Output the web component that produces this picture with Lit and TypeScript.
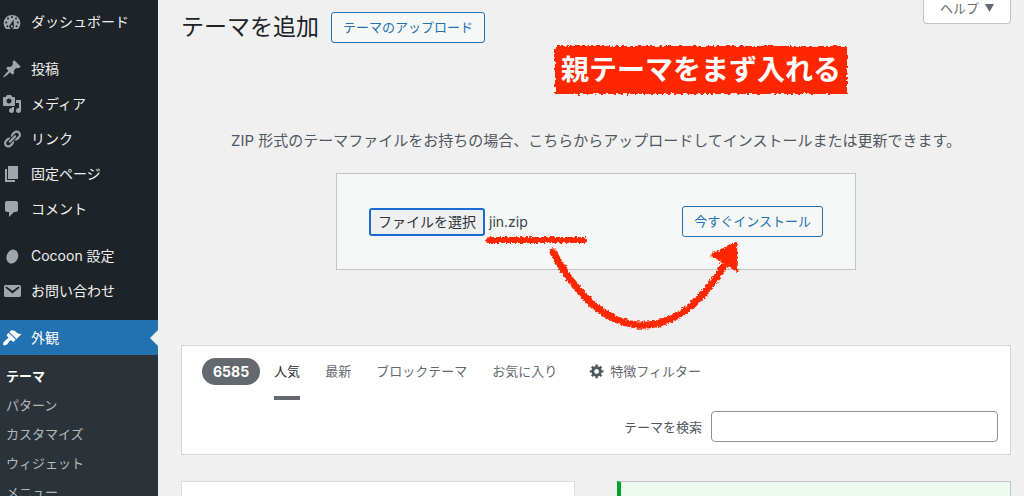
import { LitElement, html, css, svg } from "lit";
import { customElement, property, state, query } from "lit/decorators.js";
import { classMap } from "lit/directives/class-map.js";

const ICONS: Record<string, unknown> = {
  dashboard: svg`<path fill-rule="evenodd" d="M3.8 17A8.6 8.6 0 0 1 1.6 11.3a8.4 8.4 0 0 1 16.8 0A8.6 8.6 0 0 1 16.2 17zM10 4a1 1 0 1 0 0 2 1 1 0 0 0 0-2zM6 5.600a1 1 0 1 0 0 2 1 1 0 0 0 0-2zM14 5.600a1 1 0 1 0 0 2 1 1 0 0 0 0-2zM4.200 9.500a1 1 0 1 0 0 2 1 1 0 0 0 0-2zM15.800 9.500a1 1 0 1 0 0 2 1 1 0 0 0 0-2zM5.400 13.300a1 1 0 1 0 0 2 1 1 0 0 0 0-2zM14.600 13.300a1 1 0 1 0 0 2 1 1 0 0 0 0-2zM11.600 7.400L8.300 12.600a2.400 2.400 0 1 0 3.600 1.200zM9.900 13.300a1.100 1.100 0 1 1 0 2.200 1.100 1.100 0 0 1 0-2.200z"/>`,
  post: svg`<path d="M10.44 3.02l1.82-1.82 6.36 6.35-1.83 1.82c-1.05-.68-2.48-.57-3.41.36l-.75.75c-.92.93-1.04 2.35-.35 3.41l-1.83 1.82-2.41-2.41-2.8 2.79c-.42.42-3.38 2.71-3.8 2.29s1.86-3.39 2.28-3.81l2.79-2.79L4.1 9.36l1.83-1.82c1.05.69 2.48.57 3.4-.36l.75-.75c.93-.92 1.05-2.35.36-3.41z"/>`,
  media: svg`<path fill-rule="evenodd" d="M13 11V4c0-.55-.45-1-1-1h-1.67L9 1H5L3.67 3H2c-.55 0-1 .45-1 1v7c0 .55.45 1 1 1h10c.55 0 1-.45 1-1zM7 4.500c1.380 0 2.500 1.120 2.500 2.500S8.380 9.500 7 9.500 4.500 8.380 4.500 7 5.620 4.500 7 4.500zM14 6h5v10.500c0 1.380-1.120 2.500-2.500 2.500S14 17.880 14 16.500s1.120-2.500 2.500-2.500c.17 0 .34.02.5.05V9h-3V6zm-4 8.050V13h2v3.500c0 1.380-1.120 2.500-2.500 2.500S7 17.880 7 16.500 8.120 14 9.500 14c.17 0 .34.02.5.05z"/>`,
  link: svg`<path d="M17.740 2.760c1.680 1.690 1.680 4.410 0 6.100l-1.530 1.520c-1.120 1.120-2.700 1.470-4.140 1.090l2.620-2.610.760-.770.760-.760c.840-.840.840-2.200 0-3.040-.840-.850-2.200-.850-3.040 0l-.770.760-3.380 3.380c-.370-1.440-.020-3.020 1.100-4.140l1.520-1.530c1.690-1.680 4.420-1.680 6.100 0zM8.590 13.430l5.340-5.340c.420-.420.420-1.100 0-1.520-.440-.430-1.130-.390-1.530 0l-5.330 5.340c-.420.420-.420 1.100 0 1.520.440.430 1.130.390 1.520 0zm-.760 2.290l4.140-4.150c.380 1.440.030 3.020-1.090 4.140l-1.520 1.530c-1.690 1.680-4.410 1.680-6.100 0-1.680-1.680-1.680-4.420 0-6.100l1.530-1.520c1.120-1.120 2.700-1.470 4.140-1.100l-4.140 4.150c-.850.840-.850 2.200 0 3.050.840.840 2.200.840 3.040 0z"/>`,
  page: svg`<path d="M6 15V2h10v13H6zm-1 1h8v2H3V5h2v11z"/>`,
  comment: svg`<path d="M5 2h9c1.100 0 2 .9 2 2v7c0 1.100-.9 2-2 2h-2l-5 5v-5H5c-1.100 0-2-.9-2-2V4c0-1.100.9-2 2-2z"/>`,
  cocoon: svg`<ellipse cx="10.300" cy="10.600" rx="5.700" ry="7.200" transform="rotate(22 10.300 10.600)"/>`,
  mail: svg`<path fill-rule="evenodd" d="M3.870 4h13.250C18.370 4 19 4.590 19 5.790v8.420c0 1.190-.630 1.790-1.880 1.790H3.870c-1.250 0-1.880-.6-1.880-1.790V5.790c0-1.200.630-1.790 1.880-1.790zm6.620 8.600l6.740-5.530c.240-.2.430-.660.130-1.070-.290-.410-.820-.420-1.170-.170l-5.700 3.860L4.800 5.830c-.350-.250-.880-.240-1.170.170-.3.410-.110.870.130 1.070z"/>`,
  brush: svg`<path d="M14.480 11.060L7.410 3.990l1.500-1.500c.5-.56 2.300-.47 3.510.32 1.210.8 1.430 1.280 2.910 2.100 1.180.64 2.450 1.260 4.450.85zm-.71.71L6.700 4.700 4.930 6.470c-.39.39-.39 1.020 0 1.410l1.060 1.060c.39.39.39 1.030 0 1.420-.6.6-1.430 1.110-2.210 1.690-.35.26-.7.53-1.010.84C1.430 14.230.4 16.080 1.400 17.070c.99 1 2.840-.03 4.180-1.360.31-.31.58-.66.85-1.020.57-.78 1.080-1.610 1.690-2.210.39-.39 1.020-.39 1.410 0l1.060 1.060c.39.39 1.020.39 1.410 0z"/>`,
  gear: svg`<path fill-rule="evenodd" d="M18 12h-2.180c-.17.7-.44 1.350-.81 1.930l1.540 1.540-2.100 2.100-1.540-1.540c-.58.36-1.230.63-1.910.79V19H8v-2.180c-.68-.16-1.330-.43-1.910-.79l-1.540 1.540-2.120-2.120 1.540-1.540c-.36-.58-.63-1.230-.79-1.910H1V9.030h2.170c.16-.7.44-1.350.8-1.940L2.430 5.550l2.100-2.100 1.540 1.540c.58-.37 1.240-.64 1.930-.81V2h3v2.180c.68.16 1.330.43 1.910.79l1.540-1.540 2.120 2.120-1.540 1.540c.36.59.64 1.240.8 1.940H18V12zm-8.500 1.500c1.660 0 3-1.340 3-3s-1.340-3-3-3-3 1.340-3 3 1.340 3 3 3z"/>`,
};

const icon = (name: string) =>
  html`<svg class="icon" viewBox="0 0 20 20" aria-hidden="true">${ICONS[name]}</svg>`;

const FONT = css`Inter, "Noto Sans CJK JP", sans-serif`;

@customElement("admin-menu")
export class AdminMenu extends LitElement {
  static styles = css`
    :host { display: block; background: #1d2327; font-family: ${FONT}; }
    .menu { display: flex; flex-direction: column; padding-top: 4px; }
    .group, .submenu { list-style: none; margin: 0 0 12px; padding: 0; }
    .group:last-child { margin: 0; }
    .item {
      display: flex; align-items: center; gap: 9px; height: 35px; padding-left: 2px;
      color: #f0f0f1; font-size: 14px; line-height: 20px; text-decoration: none;
      position: relative;
    }
    .icon { width: 20px; height: 20px; fill: #a0a6ac; flex: none; }
    .current { background: #2271b1; color: #fff; }
    .current .icon { fill: #fff; }
    .current::after {
      content: ""; position: absolute; right: 0; top: 50%; margin-top: -8px;
      border: 8px solid transparent; border-right-color: #f0f0f1;
    }
    .submenu { background: #2c3338; padding: 7px 0 8px; margin: 0; }
    .sub {
      display: block; padding: 0 6px; color: #b4b9be; font-size: 13px; line-height: 29px;
      text-decoration: none;
    }
    .active { color: #fff; font-weight: 700; }
  `;

  private groups = [
    [["dashboard", "ダッシュボード"]],
    [["post", "投稿"], ["media", "メディア"], ["link", "リンク"], ["page", "固定ページ"], ["comment", "コメント"]],
    [["cocoon", "Cocoon 設定"], ["mail", "お問い合わせ"]],
    [["brush", "外観"]],
  ];
  private subs = ["テーマ", "パターン", "カスタマイズ", "ウィジェット", "メニュー"];

  render() {
    return html`<nav class="menu" aria-label="メインメニュー">
      ${this.groups.map(
        (group) => html`<ul class="group">
          ${group.map(([glyph, label]) => {
            const current = glyph === "brush";
            return html`<li>
              <a href="#" class=${classMap({ item: true, current })}>${icon(glyph)}<span>${label}</span></a>
              ${current
                ? html`<ul class="submenu">
                    ${this.subs.map((s, i) => html`<li><a href="#" class=${classMap({ sub: true, active: i === 0 })}>${s}</a></li>`)}
                  </ul>`
                : ""}
            </li>`;
          })}
        </ul>`,
      )}
    </nav>`;
  }
}

@customElement("theme-upload")
export class ThemeUpload extends LitElement {
  @state() private fileName = "jin.zip";
  @query(".file") private file!: HTMLInputElement;

  static styles = css`
    :host { display: block; font-family: ${FONT}; }
    .hint { margin: 0; text-align: center; font-size: 15px; line-height: 24px; color: #50575e; white-space: nowrap; }
    .form {
      position: relative; box-sizing: border-box; max-width: 520px; margin: 20px auto 0;
      padding: 32px; display: flex; align-items: center;
      background: #f6f7f7; border: 1px solid #c3c4c7;
    }
    .file { display: none; }
    .choose {
      font: inherit; font-size: 14px; line-height: 24px; height: 28px; padding: 0 7px; color: #2c3338;
      background: #efefef; border: 2px solid #1a6dd0; border-radius: 3px;
    }
    .name { flex: 1; padding-left: 4px; font-size: 14px; line-height: 20px; color: #3c434a; }
    .install {
      font: inherit; font-size: 13px; line-height: 29px; height: 31px; padding: 0 11px; color: #2271b1;
      background: #f6f7f7; border: 1px solid #2271b1; border-radius: 3px;
    }
    .marks { position: absolute; left: 140px; top: 55px; width: 280px; height: 110px; overflow: visible; pointer-events: none; }
    .stroke { fill: none; stroke: #ff2600; stroke-linecap: round; }
    .line { stroke-width: 6; }
    .curve { stroke-width: 7; }
    .head { fill: #ff2600; stroke: #ff2600; stroke-width: 2; stroke-linejoin: round; }
  `;

  render() {
    return html`
      <p class="hint">ZIP 形式のテーマファイルをお持ちの場合、こちらからアップロードしてインストールまたは更新できます。</p>
      <form class="form" @submit=${(e: Event) => e.preventDefault()}>
        <input class="file" type="file" accept=".zip" aria-label="テーマの zip ファイル"
          @change=${() => (this.fileName = this.file.files?.[0]?.name ?? "")} />
        <button class="choose" type="button" @click=${() => this.file.click()}>ファイルを選択</button>
        <span class="name">${this.fileName}</span>
        <button class="install" type="submit">今すぐインストール</button>
        <svg class="marks" viewBox="0 0 280 110" aria-hidden="true">
          <filter id="crayon" filterUnits="userSpaceOnUse" x="-10" y="-10" width="300" height="130">
            <feTurbulence type="fractalNoise" baseFrequency="0.45" numOctaves="2" seed="4" />
            <feDisplacementMap in="SourceGraphic" scale="5" xChannelSelector="R" yChannelSelector="G" />
          </filter>
          <g filter="url(#crayon)">
            <path class="stroke line" d="M12 11H107" />
            <path class="stroke curve" d="M76 23C123 110 193 125 246 38" />
            <path class="head" d="M234 26L259 14L260 42Z" />
          </g>
        </svg>
      </form>
    `;
  }
}

@customElement("theme-filter")
export class ThemeFilter extends LitElement {
  @property({ type: Number }) count = 6585;
  @state() private selected = "人気";

  static styles = css`
    :host {
      display: block; background: #fff; border: 1px solid #d5d6d8; font-family: ${FONT};
      font-size: 13px; line-height: 20px; color: #50575e;
    }
    .tabs { display: flex; align-items: stretch; height: 54px; padding-left: 20px; }
    .total { display: flex; align-items: center; margin-right: 14px; padding-bottom: 4px; }
    .count {
      padding: 0 11px; border-radius: 14px; background: #646970; color: #fff;
      font-size: 14px; font-weight: 700; line-height: 27px;
    }
    .tab, .filter {
      font: inherit; color: #646970; background: none; border: 0 solid transparent;
      border-bottom-width: 4px; padding: 0; margin-right: 25px;
    }
    .selected { color: #2c3338; border-bottom-color: #646970; }
    .filter { display: flex; align-items: center; gap: 5px; margin-left: 7px; }
    .icon { width: 16px; height: 16px; fill: #50575e; }
    .search { display: flex; justify-content: flex-end; align-items: center; gap: 9px; padding: 11px 12px 12px; }
    .box {
      box-sizing: border-box; width: 287px; height: 31px; border: 1px solid #8c8f94;
      border-radius: 4px; background: #fff; font: inherit; padding: 0 8px;
    }
  `;

  render() {
    return html`
      <div class="tabs">
        <span class="total"><span class="count">${this.count}</span></span>
        ${["人気", "最新", "ブロックテーマ", "お気に入り"].map(
          (t) => html`<button type="button" class=${classMap({ tab: true, selected: t === this.selected })}
            @click=${() => (this.selected = t)}>${t}</button>`,
        )}
        <button type="button" class="filter">${icon("gear")}特徴フィルター</button>
      </div>
      <div class="search">
        <label for="q">テーマを検索</label>
        <input class="box" id="q" type="search" />
      </div>
    `;
  }
}

@customElement("app-root")
export class AppRoot extends LitElement {
  static styles = css`
    :host {
      display: grid; grid-template-columns: 158px minmax(0, 1fr); height: 100vh; overflow: hidden;
      background: #f0f0f1; font-family: ${FONT};
    }
    .main { position: relative; padding: 0 13px 0 23px; }
    .head { display: flex; align-items: flex-start; }
    .title { margin: 10px 12px 0 0; font-size: 23px; font-weight: 400; line-height: 34px; color: #1d2327; }
    .upload {
      margin: 12px auto 0 0; padding: 0 11px; height: 31px; font: inherit; font-size: 13px; line-height: 29px;
      color: #2271b1; background: #f6f7f7; border: 1px solid #2271b1; border-radius: 3px;
    }
    .help {
      display: flex; align-items: center; gap: 6px; height: 24px; padding: 0 16px 8px;
      font: inherit; font-size: 13px; line-height: 16px; color: #646970; background: #fff;
      border: 1px solid #c3c4c7; border-top: 0; border-radius: 0 0 4px 4px;
    }
    .arrow { width: 9px; height: 8px; fill: #646970; }
    .note { position: absolute; left: 396px; top: 45px; width: 294px; height: 50px; }
    .paint { position: absolute; inset: 0; width: 100%; height: 100%; overflow: visible; fill: #ff2600; }
    .words {
      position: relative; margin: 0; text-align: center; color: #fff; font-size: 28px;
      font-weight: 700; line-height: 50px; white-space: nowrap;
    }
    .uploader { margin-top: 85px; }
    .filters { margin-top: 75px; }
    .cards { display: grid; grid-template-columns: 1fr 1fr; gap: 42px; margin-top: 26px; }
    .card { height: 260px; background: #fff; border: 1px solid #dcdcde; }
    .installed { background: #edfaef; border-color: #c3c4c7; border-left: 4px solid #00a32a; }
  `;

  render() {
    return html`
      <admin-menu></admin-menu>
      <main class="main">
        <header class="head">
          <h1 class="title">テーマを追加</h1>
          <button class="upload" type="button">テーマのアップロード</button>
          <button class="help" type="button">ヘルプ
            <svg class="arrow" viewBox="0 0 9 8" aria-hidden="true"><path d="M0 0h9L4.500 8z" /></svg>
          </button>
        </header>
        <div class="note">
          <svg class="paint" viewBox="0 0 294 50" aria-hidden="true">
            <filter id="rough" filterUnits="userSpaceOnUse" x="-8" y="-8" width="310" height="66">
              <feTurbulence type="fractalNoise" baseFrequency="0.300" numOctaves="2" seed="7" />
              <feDisplacementMap in="SourceGraphic" scale="5" xChannelSelector="R" yChannelSelector="G" />
            </filter>
            <rect x="1" y="1" width="292" height="48" filter="url(#rough)" />
          </svg>
          <p class="words">親テーマをまず入れる</p>
        </div>
        <theme-upload class="uploader"></theme-upload>
        <theme-filter class="filters"></theme-filter>
        <section class="cards">
          <article class="card"></article>
          <article class="card installed"></article>
        </section>
      </main>
    `;
  }
}
